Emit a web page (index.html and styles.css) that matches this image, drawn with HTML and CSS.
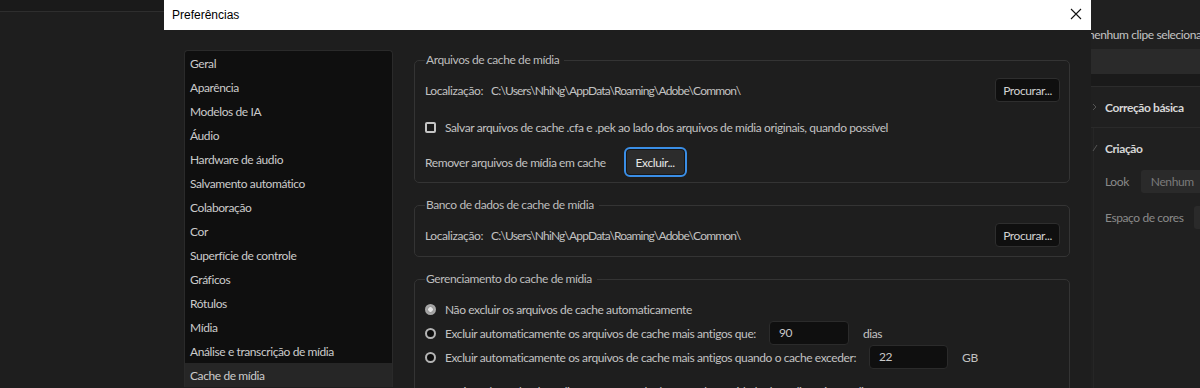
FILE: index.html
```html
<!DOCTYPE html>
<html lang="pt-BR">
<head>
<meta charset="utf-8">
<title>Preferências</title>
<link rel="stylesheet" href="styles.css">
</head>
<body>
<div class="screen">
  <div class="bg-left"><div class="bg-left-top"></div></div>

  <div class="dialog">
    <div class="titlebar">
      <span class="title">Preferências</span>
      <svg class="close" width="12" height="12" viewBox="0 0 12 12"><path d="M1 1 L11 11 M11 1 L1 11" stroke="#111" stroke-width="1.1" fill="none"/></svg>
    </div>
    <div class="dlg-body">
      <ul class="nav">
        <li>Geral</li>
        <li>Aparência</li>
        <li>Modelos de IA</li>
        <li>Áudio</li>
        <li>Hardware de áudio</li>
        <li>Salvamento automático</li>
        <li>Colaboração</li>
        <li>Cor</li>
        <li>Superfície de controle</li>
        <li>Gráficos</li>
        <li>Rótulos</li>
        <li>Mídia</li>
        <li>Análise e transcrição de mídia</li>
        <li class="active">Cache de mídia</li>
      </ul>

      <div class="content">
        <fieldset class="group g1">
          <legend>Arquivos de cache de mídia</legend>
          <div class="row r-loc">
            <span class="lbl">Localização:</span>
            <span class="path">C:\Users\NhiNg\AppData\Roaming\Adobe\Common\</span>
            <button class="btn">Procurar...</button>
          </div>
          <div class="row r-chk">
            <span class="checkbox"></span>
            <span>Salvar arquivos de cache .cfa e .pek ao lado dos arquivos de mídia originais, quando possível</span>
          </div>
          <div class="row r-rem">
            <span>Remover arquivos de mídia em cache</span>
            <button class="btn btn-focus">Excluir...</button>
          </div>
        </fieldset>

        <fieldset class="group g2">
          <legend>Banco de dados de cache de mídia</legend>
          <div class="row r-loc">
            <span class="lbl">Localização:</span>
            <span class="path">C:\Users\NhiNg\AppData\Roaming\Adobe\Common\</span>
            <button class="btn">Procurar...</button>
          </div>
        </fieldset>

        <fieldset class="group g3">
          <legend>Gerenciamento do cache de mídia</legend>
          <div class="row r-radio">
            <span class="radio on"></span>
            <span>Não excluir os arquivos de cache automaticamente</span>
          </div>
          <div class="row r-radio">
            <span class="radio"></span>
            <span>Excluir automaticamente os arquivos de cache mais antigos que:</span>
            <span class="field f-days">90</span>
            <span class="unit">dias</span>
          </div>
          <div class="row r-radio">
            <span class="radio"></span>
            <span>Excluir automaticamente os arquivos de cache mais antigos quando o cache exceder:</span>
            <span class="field f-gb">22</span>
            <span class="unit">GB</span>
          </div>
          <div class="row r-note">
            <span>Os arquivos de Cache de mídia não serão excluídos quando a unidade de mídia estiver offline</span>
          </div>
        </fieldset>
      </div>
    </div>
  </div>

  <div class="bg-right">
    <div class="rp-title">nenhum clipe selecionado</div>
    <div class="rp-bar"></div>
    <div class="rp-gap"></div>
    <div class="rp-sec rp-sep">
      <svg class="chev" width="6" height="8" viewBox="0 0 6 8"><path d="M1 1 L4 4 L1 7" stroke="#555" fill="none"/></svg>
      <span>Correção básica</span>
    </div>
    <div class="rp-lower">
      <div class="rp-sec">
        <svg class="chev" width="6" height="8" viewBox="0 0 6 8"><path d="M1 7 L5 1" stroke="#555" fill="none"/></svg>
        <span>Criação</span>
      </div>
      <div class="rp-field f-look">
        <span class="rp-lbl">Look</span>
        <span class="rp-drop">Nenhum</span>
      </div>
      <div class="rp-field f-space">
        <span class="rp-lbl">Espaço de cores</span>
        <span class="rp-drop"></span>
      </div>
    </div>
  </div>
</div>
</body>
</html>
```

FILE: styles.css
```css
* { box-sizing: border-box; }
html, body { margin: 0; padding: 0; }
body {
  width: 1200px;
  height: 388px;
  overflow: hidden;
  background: #1e1e1e;
  font-family: "Lato", "Noto Sans", sans-serif;
  font-size: 12px;
  letter-spacing: -0.4px;
  color: #c2c2c2;
}
.screen {
  display: flex;
  width: 1200px;
  height: 388px;
  overflow: hidden;
}

/* left background */
.bg-left {
  width: 164px;
  flex: none;
  background: #1e1e1e;
}
.bg-left-top {
  height: 12px;
  background: #1a1a1a;
  border-bottom: 1px solid #2e2e2e;
}

/* dialog */
.dialog {
  width: 927px;
  flex: none;
  display: flex;
  flex-direction: column;
  background: #1e1e1e;
}
.titlebar {
  height: 30px;
  flex: none;
  background: #ffffff;
  display: flex;
  align-items: center;
  justify-content: space-between;
  padding: 0 9px 0 8px;
}
.title {
  font-family: "Segoe UI", "Liberation Sans", sans-serif;
  font-size: 12px;
  letter-spacing: 0;
  color: #000;
  margin-top: -1px;
}
.close { margin-top: -2px; }

.dlg-body {
  flex: 1;
  display: flex;
  padding: 20px 21px 0 20px;
  min-height: 0;
}

.nav {
  list-style: none;
  margin: 0;
  padding: 0;
  width: 209px;
  flex: none;
  background: #0f0f0f;
  border: 1px solid #2a2a2a;
  border-bottom: none;
  border-radius: 4px 4px 0 0;
  align-self: flex-start;
}
.nav li {
  height: 24px;
  line-height: 22px;
  padding: 2px 0 0 5px;
  color: #cbcbcb;
  white-space: nowrap;
}
.nav li.active { background: #262626; }

.content {
  margin-left: 21px;
  width: 656px;
  flex: none;
  display: flex;
  flex-direction: column;
}

.group {
  margin: 0;
  min-width: 0;
  border: 1px solid #343434;
  border-radius: 5px;
  padding: 10px 9px 5px 10px;
}
.group legend {
  padding: 0 5px 0 1px;
  line-height: 16px;
  color: #bdbdbd;
}
.g1 { margin-top: 2px; }
.g2 { margin-top: 14px; padding-bottom: 9px; }
.g3 { margin-top: 14px; }

.row {
  display: flex;
  align-items: center;
  height: 24px;
  white-space: nowrap;
}
.r-chk { margin-top: 13px; }
.r-rem { margin-top: 8px; height: 30px; }
.lbl { margin-right: 8px; }
.path { flex: 1; letter-spacing: -0.8px; }

.btn {
  font-family: inherit;
  font-size: 12px;
  letter-spacing: -0.4px;
  height: 24px;
  width: 65px;
  padding: 0;
  background: #0f0f0f;
  color: #d2d2d2;
  border: 1px solid #2e2e2e;
  border-radius: 4px;
}
.btn-focus {
  margin-left: 18px;
  width: 63px;
  height: 30px;
  background: #2c2c2c;
  color: #e6e6e6;
  border: 2px solid #3a8ee6;
  border-radius: 6px;
  box-shadow: inset 0 0 0 1px #161616;
}

.checkbox {
  width: 11px;
  height: 11px;
  border: 2px solid #c4c4c4;
  border-radius: 2px;
  background: #1a1a1a;
  margin-right: 9px;
  flex: none;
}

.radio {
  width: 11px;
  height: 11px;
  border-radius: 50%;
  border: 2px solid #b4b4b4;
  background: #0c0c0c;
  margin-right: 9px;
  flex: none;
}
.radio.on {
  border-color: #a6a6a6;
  background: radial-gradient(circle, #e4e4e4 0 2px, #9c9c9c 2.6px);
}

.field {
  height: 24px;
  line-height: 22px;
  width: 80px;
  padding-left: 9px;
  background: #0f0f0f;
  border: 1px solid #2b2b2b;
  border-radius: 4px;
  color: #c8c8c8;
}
.f-days { margin-left: 13px; }
.f-gb { margin-left: 13px; width: 79px; }
.unit { margin-left: 14px; }
.r-note { margin-top: 10px; }

/* right background panel */
.bg-right {
  width: 109px;
  flex: none;
  background: #202020;
  overflow: hidden;
  display: flex;
  flex-direction: column;
}
.rp-title {
  height: 49px;
  padding-top: 28px;
  line-height: 14px;
  white-space: nowrap;
  text-indent: -3px;
  color: #c4c4c4;
}
.rp-bar {
  height: 25px;
  background: #2a2a2a;
}
.rp-gap {
  height: 13px;
  background: #1a1a1a;
  border-bottom: 1px solid #2c2c2c;
}
.rp-sec {
  height: 40px;
  display: flex;
  align-items: center;
  white-space: nowrap;
  font-weight: bold;
  color: #d6d6d6;
  padding-left: 1px;
}
.rp-sep { border-bottom: 1px solid #2a2a2a; height: 41px; }
.chev { margin-right: 7px; flex: none; }
.rp-lower {
  flex: 1;
  border-left: 1px solid #262626;
  margin-left: 2px;
}
.rp-lower .rp-sec { padding-left: 0; margin-left: -2px; }
.rp-field {
  display: flex;
  align-items: center;
  height: 24px;
  padding-left: 11px;
  white-space: nowrap;
  color: #8a8a8a;
}
.f-look { margin-top: 1px; }
.f-space { margin-top: 12px; }
.rp-drop {
  height: 23px;
  line-height: 23px;
  background: #2a2a2a;
  border-radius: 3px;
  padding-left: 10px;
  color: #7a7a7a;
  width: 70px;
  flex: none;
}
.f-look .rp-drop { margin-left: 12px; }
.f-space .rp-drop { margin-left: 11px; }
```
